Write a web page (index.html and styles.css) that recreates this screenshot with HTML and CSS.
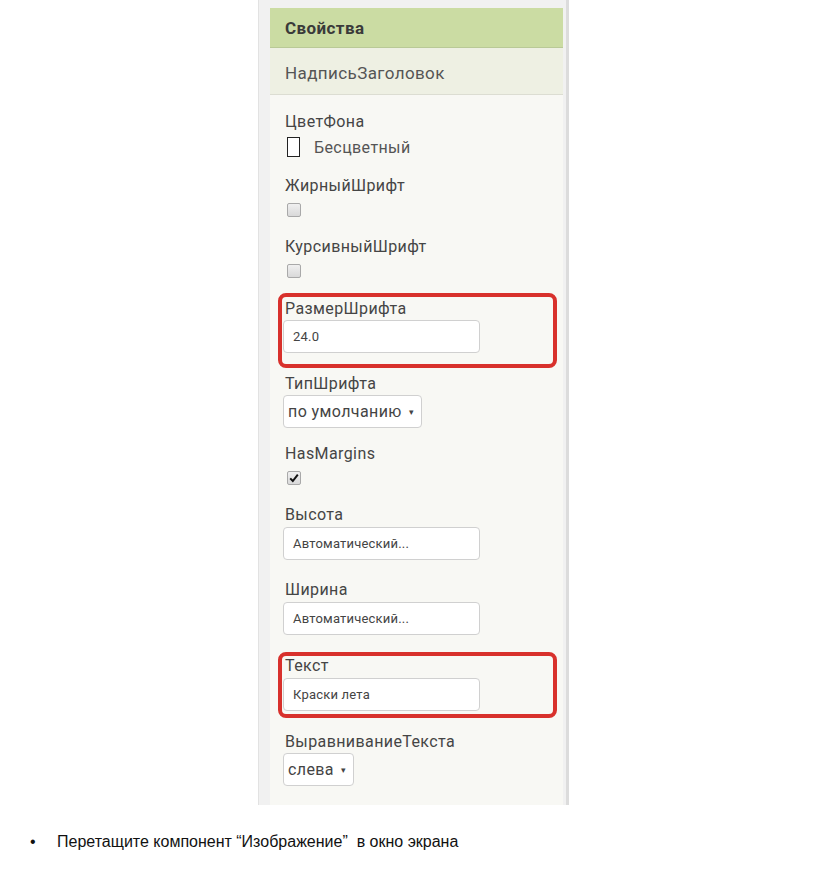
FILE: index.html
```html
<!DOCTYPE html>
<html lang="ru">
<head>
  <meta charset="UTF-8">
  <meta name="viewport" content="width=device-width, initial-scale=1.0">
  <title>Свойства</title>
  <link rel="stylesheet" href="styles.css">
</head>
<body>
  <div class="panel">
    <div class="panel-inner">
      <div class="panel-head">Свойства</div>
      <div class="component-name">НадписьЗаголовок</div>
      <div class="props">
        <div class="prop">
          <div class="prop-label">ЦветФона</div>
          <div class="color-row">
            <span class="swatch"></span>
            <span class="color-name">Бесцветный</span>
          </div>
        </div>
        <div class="prop">
          <div class="prop-label">ЖирныйШрифт</div>
          <span class="check"></span>
        </div>
        <div class="prop">
          <div class="prop-label">КурсивныйШрифт</div>
          <span class="check"></span>
        </div>
        <div class="prop marked marked-size">
          <div class="prop-label">РазмерШрифта</div>
          <div class="field">24.0</div>
        </div>
        <div class="prop after-marked">
          <div class="prop-label">ТипШрифта</div>
          <div class="dropdown">по умолчанию <span class="caret">▾</span></div>
        </div>
        <div class="prop">
          <div class="prop-label">HasMargins</div>
          <span class="check checked">
            <svg width="10" height="10" viewBox="0 0 10 10"><path d="M1.2 5.4 L3.8 8 L8.8 1.6" fill="none" stroke="#111" stroke-width="2"/></svg>
          </span>
        </div>
        <div class="prop">
          <div class="prop-label">Высота</div>
          <div class="field">Автоматический...</div>
        </div>
        <div class="prop">
          <div class="prop-label">Ширина</div>
          <div class="field">Автоматический...</div>
        </div>
        <div class="prop marked marked-text">
          <div class="prop-label">Текст</div>
          <div class="field">Краски лета</div>
        </div>
        <div class="prop after-text">
          <div class="prop-label">ВыравниваниеТекста</div>
          <div class="dropdown">слева <span class="caret">▾</span></div>
        </div>
      </div>
    </div>
  </div>

  <ul class="notes">
    <li>Перетащите компонент “Изображение”&nbsp; в окно экрана</li>
  </ul>
</body>
</html>
```

FILE: styles.css
```css
body {
  margin: 0;
  background-color: #fff;
  font-family: Roboto, "Noto Sans", sans-serif;
  color: #444;
}

.panel {
  width: 293px;
  margin-left: 258px;
  padding: 8px 3px 0 11px;
  background-color: #f1f1f1;
  border-left: 1px solid #e2e2e2;
  border-right: 3px solid #dcdcdc;
}

.panel-inner {
  width: 293px;
  background-color: #f8f8f4;
  padding-bottom: 19px;
}

.panel-head {
  height: 39px;
  line-height: 40px;
  padding-left: 15px;
  background-color: #cbdca3;
  border-bottom: 1px solid #b9c997;
  font-size: 17px;
  font-weight: bold;
  letter-spacing: 0.4px;
  color: #3a3a3a;
}

.component-name {
  height: 46px;
  line-height: 50px;
  padding-left: 15px;
  background-color: #eef0e3;
  border-bottom: 1px solid #dcddd2;
  font-size: 17px;
  letter-spacing: 0.4px;
  color: #555;
}

.props {
  padding: 17px 6px 0 13px;
}

.prop {
  display: flow-root;
  margin-top: 16px;
}

.prop:first-child {
  margin-top: 0;
}

.prop-label {
  height: 20px;
  line-height: 20px;
  padding-left: 2px;
  font-size: 16px;
  letter-spacing: 0.4px;
  color: #454545;
}

.color-row {
  display: flex;
  align-items: center;
  height: 26px;
  margin-top: 2px;
}

.swatch {
  width: 11px;
  height: 18px;
  margin-left: 4px;
  border: 1.5px solid #222;
  background-color: #fff;
}

.color-name {
  margin-left: 14px;
  font-size: 16px;
  letter-spacing: 0.4px;
  color: #555;
}

.check {
  display: flex;
  align-items: center;
  justify-content: center;
  width: 12px;
  height: 12px;
  margin: 7px 0 4px 4px;
  border: 1px solid #a9a9a9;
  border-radius: 2px;
  background: linear-gradient(#f0f0f0, #d9d9d9);
}

.field {
  width: 186px;
  height: 31px;
  line-height: 31px;
  margin: 2px 0 4px;
  padding-left: 9px;
  border: 1px solid #d0d0d0;
  border-radius: 4px;
  background-color: #fff;
  font-size: 13px;
  letter-spacing: 0.2px;
  color: #444;
}

.dropdown {
  display: inline-block;
  height: 31px;
  line-height: 31px;
  margin-top: 1px;
  padding: 0 6px 0 4px;
  border: 1px solid #d0d0d0;
  border-radius: 4px;
  background-color: #fff;
  font-size: 16px;
  letter-spacing: 0.4px;
  color: #444;
}

.caret {
  margin-left: 3px;
  font-size: 9px;
  vertical-align: 2px;
}

.marked {
  margin-left: -5px;
  padding-left: 1px;
  border: 4px solid #d8312c;
  border-radius: 8px;
}

.marked-size {
  margin-top: 11px;
  padding-top: 2px;
  padding-bottom: 7px;
}

.marked-size .field {
  margin-top: 1px;
}

.marked-text {
  margin-top: 13px;
  padding-top: 0;
  padding-bottom: 0;
}

.marked-text .field {
  margin-bottom: 3px;
}

.after-marked {
  margin-top: 6px;
}

.after-text {
  margin-top: 14px;
}

.notes {
  margin: 0;
  padding: 24px 0 0 57px;
  list-style: none;
  font-family: "Liberation Sans", Arial, sans-serif;
  font-size: 16px;
  color: #111;
}

.notes li {
  position: relative;
  line-height: 26px;
}

.notes li::before {
  content: "•";
  position: absolute;
  left: -27px;
}
```
